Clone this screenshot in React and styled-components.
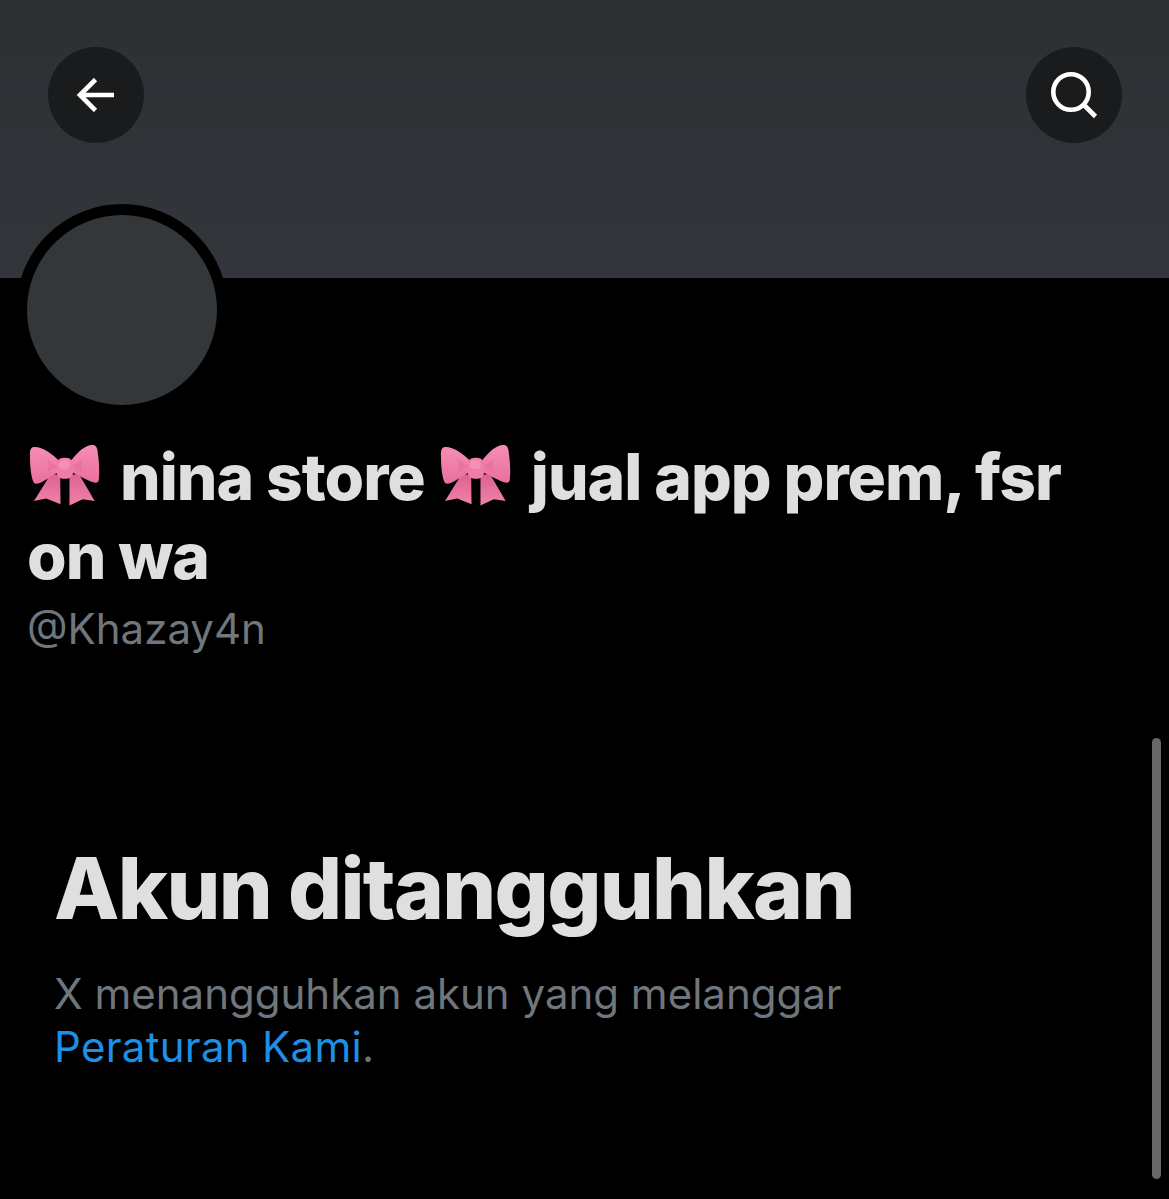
import React from 'react';
import styled, { createGlobalStyle } from 'styled-components';

const GlobalStyle = createGlobalStyle`
  html, body {
    margin: 0;
    padding: 0;
    background: #000;
    overflow: hidden;
  }
  * { box-sizing: border-box; }
`;

const Page = styled.div`
  position: relative;
  width: 1169px;
  height: 1199px;
  overflow: hidden;
  background: #000;
  font-family: Inter, "Liberation Sans", sans-serif;
`;

const Banner = styled.header`
  height: 278px;
  padding: 47px 47px 0 48px;
  display: flex;
  align-items: flex-start;
  justify-content: space-between;
  background: linear-gradient(#2d2f33, #32363a);
`;

const RoundButton = styled.button`
  width: 96px;
  height: 96px;
  padding: 0;
  border: none;
  border-radius: 50%;
  background: #191b1d;
  display: flex;
  align-items: center;
  justify-content: center;
`;

const Avatar = styled.div`
  width: 212px;
  height: 212px;
  margin: -74px 0 0 16px;
  border: 11px solid #000;
  border-radius: 50%;
  background: #33373a;
`;

const Profile = styled.section`
  padding: 21px 60px 0 27px;
`;

const DisplayName = styled.h1`
  margin: 0;
  font-size: 64px;
  line-height: 79px;
  font-weight: 800;
  letter-spacing: -1px;
  color: #dfdfdf;
`;

const Handle = styled.div`
  margin-top: 9px;
  font-size: 42px;
  line-height: 50px;
  color: #6f767c;
`;

const Notice = styled.section`
  padding: 185px 0 0 54px;
`;

const NoticeTitle = styled.h2`
  margin: 0;
  font-size: 85px;
  line-height: 100px;
  font-weight: 800;
  letter-spacing: -1.7px;
  color: #dfdfdf;
`;

const NoticeBody = styled.p`
  margin: 28px 0 0;
  font-size: 42px;
  line-height: 53px;
  color: #6f767c;
`;

const RulesLink = styled.a`
  color: #1d8fe6;
  letter-spacing: 0.3px;
  text-decoration: none;
`;

const ScrollThumb = styled.div`
  position: absolute;
  left: 1152px;
  top: 738px;
  width: 9px;
  height: 441px;
  border-radius: 5px;
  background: #686868;
`;

const BowGlyph = styled.svg`
  width: 73px;
  height: 65px;
  vertical-align: -7px;
  margin: 0 18px 0 2px;
`;

// pink ribbon drawn by hand, the emoji font is not available here
const Bow = () => (
  <BowGlyph viewBox="30 35 220 195" aria-hidden="true">
    <defs>
      <linearGradient id="bowLoop" x1="0" y1="0" x2="0" y2="1">
        <stop offset="0" stopColor="#f58db5" />
        <stop offset="1" stopColor="#ea6f9e" />
      </linearGradient>
      <linearGradient id="bowTail" x1="0" y1="0" x2="0" y2="1">
        <stop offset="0" stopColor="#dc628f" />
        <stop offset="1" stopColor="#f081aa" />
      </linearGradient>
    </defs>
    <path d="M96 130 L45 212 L82 205 L125 222 L124 135 Z" fill="url(#bowTail)" />
    <path d="M180 130 L228 212 L192 207 L152 226 L152 135 Z" fill="url(#bowTail)" />
    <path d="M122 92 C98 68 66 46 42 50 C34 52 32 62 33 78 C33 112 37 142 44 156 C48 164 62 160 78 150 C94 140 108 130 122 124 Z" fill="url(#bowLoop)" />
    <path d="M156 92 C178 62 204 40 226 44 C234 46 237 56 238 72 C242 102 243 132 240 150 C238 162 224 158 208 150 C188 140 170 130 156 124 Z" fill="url(#bowLoop)" />
    <path d="M84 86 C94 92 104 100 114 108 C104 114 94 120 86 126 C89 112 89 98 84 86 Z" fill="#d95e8c" opacity="0.3" />
    <path d="M192 84 C182 90 172 100 162 108 C172 114 182 120 190 126 C187 112 187 98 192 84 Z" fill="#d95e8c" opacity="0.3" />
    <rect x="113" y="82" width="50" height="63" rx="20" fill="#f07ca7" />
    <rect x="120" y="88" width="34" height="28" rx="13" fill="#f58fb7" />
  </BowGlyph>
);

const ArrowLeft = () => (
  <svg width="40" height="34" viewBox="0 0 40 34" fill="none" stroke="#fff" strokeWidth="4.6">
    <path d="M3 17 H38" />
    <path d="M19.5 1.5 L4 17 L19.5 32.5" />
  </svg>
);

const SearchIcon = () => (
  <svg width="48" height="48" viewBox="0 0 48 48" fill="none" stroke="#fff" strokeWidth="4.6">
    <circle cx="21" cy="21" r="17.7" />
    <path d="M33.5 33.5 L45.5 45.5" />
  </svg>
);

export default function App() {
  return (
    <Page>
      <GlobalStyle />
      <Banner>
        <RoundButton aria-label="Kembali"><ArrowLeft /></RoundButton>
        <RoundButton aria-label="Cari"><SearchIcon /></RoundButton>
      </Banner>
      <Avatar />
      <Profile>
        <DisplayName>
          <Bow />nina store <Bow />jual app prem, fsr on wa
        </DisplayName>
        <Handle>@Khazay4n</Handle>
      </Profile>
      <Notice>
        <NoticeTitle>Akun ditangguhkan</NoticeTitle>
        <NoticeBody>
          X menangguhkan akun yang melanggar
          <br />
          <RulesLink>Peraturan Kami</RulesLink>.
        </NoticeBody>
      </Notice>
      <ScrollThumb />
    </Page>
  );
}
